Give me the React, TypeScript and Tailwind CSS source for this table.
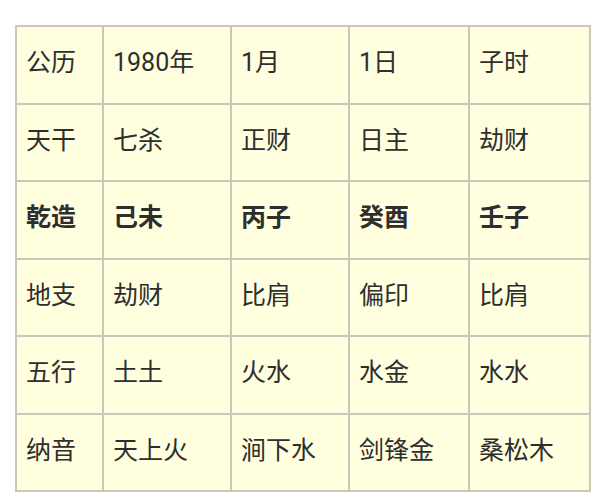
import React from "react";

const rows: { cells: string[]; bold?: boolean }[] = [
  { cells: ["公历", "1980年", "1月", "1日", "子时"] },
  { cells: ["天干", "七杀", "正财", "日主", "劫财"] },
  { cells: ["乾造", "己未", "丙子", "癸酉", "壬子"], bold: true },
  { cells: ["地支", "劫财", "比肩", "偏印", "比肩"] },
  { cells: ["五行", "土土", "火水", "水金", "水水"] },
  { cells: ["纳音", "天上火", "涧下水", "剑锋金", "桑松木"] },
];

export default function App() {
  return (
    <div
      className="w-[598px] h-[500px] bg-white pt-[25px] pl-[15px]"
      style={{ fontFamily: 'Roboto, "Noto Sans CJK SC", sans-serif' }}
    >
      <table className="border-collapse border-2 border-[#cbc8bb] bg-[#fffedf] text-[#2e2e2e] text-[25px]">
        <colgroup>
          <col className="w-[87px]" />
          <col className="w-[128px]" />
          <col className="w-[118px]" />
          <col className="w-[120px]" />
          <col className="w-[121px]" />
        </colgroup>
        <tbody>
          {rows.map((r, i) => (
            <tr key={i} className="h-[77.5px]">
              {r.cells.map((c, j) => (
                <td
                  key={j}
                  className={
                    "border-2 border-[#cbc8bb] pl-[9px] pb-[4px] align-middle leading-none " +
                    (r.bold ? "font-bold" : "font-normal")
                  }
                >
                  {c}
                </td>
              ))}
            </tr>
          ))}
        </tbody>
      </table>
    </div>
  );
}
